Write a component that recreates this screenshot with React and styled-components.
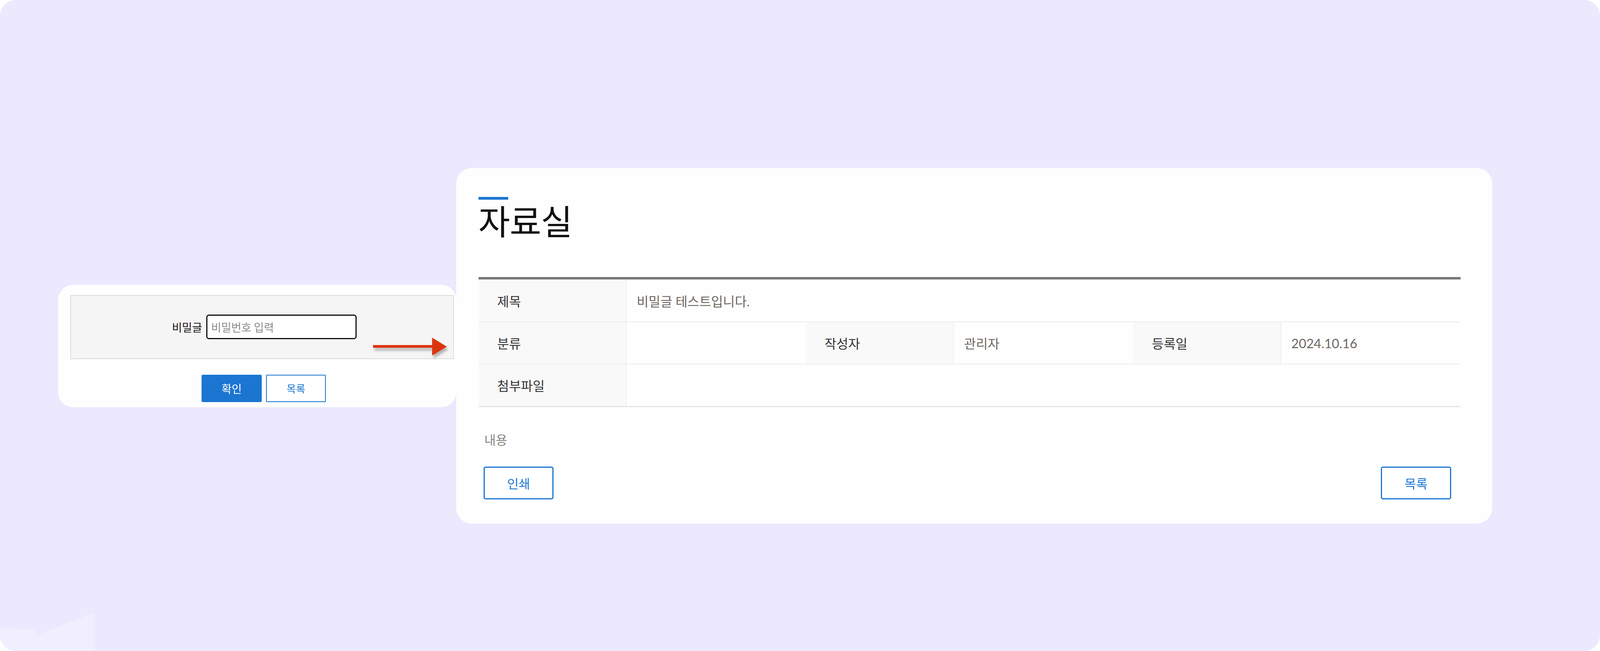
import React from "react";
import styled, { createGlobalStyle } from "styled-components";

// horizontal sizes follow the window width (design drawn at 4334px)
const vw = (px) => `${((px / 4334) * 100).toFixed(4)}vw`;

const GlobalStyle = createGlobalStyle`
  html, body {
    margin: 0;
    padding: 0;
    background: #ffffff;
    overflow: hidden;
  }

  * {
    box-sizing: border-box;
  }
`;

const INFO_ROWS = [
  { id: 1, cells: [{ label: "제목", value: "비밀글 테스트입니다.", wide: true }] },
  {
    id: 2,
    cells: [
      { label: "분류", value: "" },
      { label: "작성자", value: "관리자" },
      { label: "등록일", value: "2024.10.16" },
    ],
  },
  { id: 3, cells: [{ label: "첨부파일", value: "", wide: true }] },
];

const Arrow = () => (
  <ArrowMark viewBox="0 0 210 60" preserveAspectRatio="none">
    <defs>
      <filter id="arrowShadow" x="-10%" y="-30%" width="130%" height="180%">
        <feDropShadow dx="4" dy="7" stdDeviation="3" floodColor="#000" floodOpacity="0.28" />
      </filter>
    </defs>
    <g filter="url(#arrowShadow)">
      <rect x="0" y="19" width="160" height="7" fill="#dc3611" />
      <polygon points="157,0 196,23 157,46" fill="#dc3611" />
    </g>
  </ArrowMark>
);

const App = () => {
  return (
    <>
      <GlobalStyle />
      <Panel>
        <Corner viewBox="0 0 256 98" preserveAspectRatio="none">
          <polygon points="0,40 97,44 97,59 256,0 256,98 0,98" fill="#f1effe" />
        </Corner>

        <Stage>
          <PasswordCard>
            <PasswordBox>
              <PasswordLabel>비밀글</PasswordLabel>
              <PasswordInput type="password" placeholder="비밀번호 입력" />
            </PasswordBox>
            <PasswordActions>
              <SolidButton>확인</SolidButton>
              <LineButton $small>목록</LineButton>
            </PasswordActions>
            <Arrow />
          </PasswordCard>

          <DetailCard>
            <TitleBar />
            <Title>자료실</Title>

            <InfoTable>
              {INFO_ROWS.map(({ id, cells }) => (
                <InfoRow key={id}>
                  {cells.map(({ label, value, wide }) => (
                    <React.Fragment key={label}>
                      <HeadCell>{label}</HeadCell>
                      <ValueCell $wide={wide}>{value}</ValueCell>
                    </React.Fragment>
                  ))}
                </InfoRow>
              ))}
            </InfoTable>

            <Content>내용</Content>

            <DetailActions>
              <LineButton>인쇄</LineButton>
              <LineButton>목록</LineButton>
            </DetailActions>
          </DetailCard>
        </Stage>
      </Panel>
    </>
  );
};

export default App;

const Panel = styled.main`
  position: relative;
  width: 100%;
  height: 100vh;
  background: #ece9fe;
  border-radius: 40px;
  overflow: hidden;
  font-family: "Lato", "Noto Sans CJK KR", sans-serif;
`;

const Corner = styled.svg`
  position: absolute;
  left: 0;
  bottom: 0;
  display: block;
  width: ${vw(256)};
  height: 98px;
`;

const Stage = styled.div`
  display: flex;
  align-items: center;
  padding: 430px 0 0 ${vw(158)};
`;

const PasswordCard = styled.section`
  position: relative;
  flex: none;
  width: ${vw(1078)};
  padding: 26px ${vw(6)} 13px ${vw(32)};
  background: #fefefe;
  border-radius: 38px;
  font-family: "Noto Sans CJK KR", sans-serif;
`;

const PasswordBox = styled.div`
  display: flex;
  align-items: center;
  justify-content: center;
  height: 164px;
  padding-left: ${vw(12)};
  background: #f5f5f5;
  border: 2px solid #dddddd;
`;

const PasswordLabel = styled.label`
  font-size: 28px;
  color: #111111;
  margin-right: 10px;
`;

const PasswordInput = styled.input`
  width: ${vw(408)};
  height: 63px;
  padding: 0 10px;
  border: 3px solid #111111;
  border-radius: 7px;
  background: #ffffff;
  font-family: "Noto Sans CJK KR", sans-serif;
  font-size: 28px;
  outline: none;

  &::placeholder {
    color: #8a8a8a;
  }
`;

const PasswordActions = styled.div`
  display: flex;
  justify-content: center;
  gap: ${vw(12)};
  margin-top: 40px;
  padding-left: ${vw(8)};
`;

const SolidButton = styled.button`
  width: ${vw(163)};
  height: 70px;
  border: none;
  border-radius: 3px;
  background: #1b76d2;
  color: #ffffff;
  font-family: "Noto Sans CJK KR", sans-serif;
  font-size: 28px;
`;

const LineButton = styled.button`
  width: ${({ $small }) => ($small ? vw(161) : vw(190))};
  height: ${({ $small }) => ($small ? "70px" : "84px")};
  border: ${({ $small }) => ($small ? "2px" : "3px")} solid #1b76d2;
  border-radius: ${({ $small }) => ($small ? "2px" : "5px")};
  background: #ffffff;
  color: #1b76d2;
  font-family: "Noto Sans CJK KR", sans-serif;
  font-size: ${({ $small }) => ($small ? "26px" : "32px")};
`;

const ArrowMark = styled.svg`
  position: absolute;
  left: ${vw(852)};
  top: 135px;
  display: block;
  width: ${vw(214)};
  height: 60px;
`;

const DetailCard = styled.section`
  flex: none;
  width: ${vw(2806)};
  padding: 74px ${vw(86)} 62px ${vw(60)};
  background: #fefefe;
  border-radius: 40px;
`;

const TitleBar = styled.div`
  width: 76px;
  height: 7px;
  background: #1b76d2;
`;

const Title = styled.h1`
  margin: 7px 0 103px;
  font-family: "Noto Sans CJK KR", sans-serif;
  font-size: 88px;
  font-weight: 400;
  line-height: 1;
  color: #111111;
  letter-spacing: -1px;
`;

const InfoTable = styled.div`
  border-top: 6px solid #777777;
  border-bottom: 3px solid #e6e6e6;
`;

const InfoRow = styled.div`
  display: grid;
  grid-template-columns: 15.08% 1fr 15.08% 1fr 15.08% 1fr;
  height: 108px;
  border-top: 2px solid #ececec;
`;

const HeadCell = styled.div`
  display: flex;
  align-items: center;
  padding-left: 48px;
  background: #f9f9f9;
  border-right: 2px solid #efefef;
  font-size: 33px;
  color: #333333;
`;

const ValueCell = styled.div`
  grid-column: ${({ $wide }) => ($wide ? "span 5" : "span 1")};
  display: flex;
  align-items: center;
  padding-left: 26px;
  font-size: 33px;
  color: #6d6660;
`;

const Content = styled.p`
  margin: 68px 0 0;
  padding-left: 15px;
  font-size: 32px;
  line-height: 1;
  color: #8a8580;
`;

const DetailActions = styled.div`
  display: flex;
  justify-content: space-between;
  margin-top: 52px;
  padding: 0 24px 0 13px;
`;
